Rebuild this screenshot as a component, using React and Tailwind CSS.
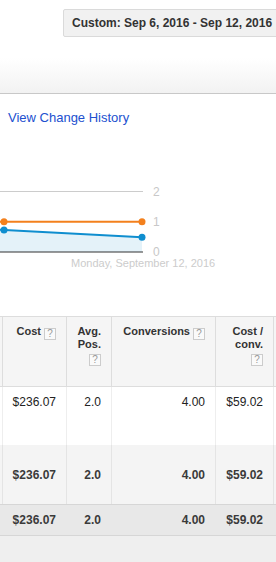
import React from 'react';

const font = { fontFamily: '"Liberation Sans", Arial, sans-serif' };

const Help = ({ className = '' }) => (
  <span className={`inline-flex items-center justify-center w-[12px] h-[12px] border border-[#cccccc] bg-[#fafafa] text-[10px] font-normal leading-none text-[#999999] align-[-2px] ${className}`}>
    ?
  </span>
);

const Chart = () => (
  <svg width="276" height="191" className="block" style={font}>
    {/* grid */}
    <line x1="0" y1="66.5" x2="143" y2="66.5" stroke="#cccccc" strokeWidth="1" />
    {/* area under blue */}
    <polygon points="0,104.8 4,105 142,112.3 142,127 0,127" fill="#e4f2f9" />
    <line x1="0" y1="104.8" x2="142" y2="112.3" stroke="#0f8ecf" strokeWidth="2" />
    <line x1="0" y1="96.8" x2="142" y2="96.8" stroke="#f3801d" strokeWidth="2" />
    <circle cx="4" cy="96.8" r="3.5" fill="#f3801d" />
    <circle cx="142" cy="96.8" r="3.5" fill="#f3801d" />
    <circle cx="4" cy="105" r="3.5" fill="#0f8ecf" />
    <circle cx="142" cy="112.3" r="3.5" fill="#0f8ecf" />
    {/* axis */}
    <line x1="0" y1="127" x2="143" y2="127" stroke="#333333" strokeWidth="1" />
    <text x="153" y="70.5" fontSize="12" fill="#c8c8c8">2</text>
    <text x="153" y="101" fontSize="12" fill="#c8c8c8">1</text>
    <text x="153" y="130.5" fontSize="12" fill="#c8c8c8">0</text>
    <text x="71" y="142" fontSize="11" fill="#cccccc">Monday, September 12, 2016</text>
  </svg>
);

const cols = 'grid grid-cols-[3px_64px_45px_104px_58px_1fr]';

export default function App() {
  const values = ['$236.07', '2.0', '4.00', '$59.02'];

  return (
    <div className="w-[276px] min-h-[562px] overflow-hidden flex flex-col bg-white" style={font}>
      {/* top bar */}
      <div className="h-[94px] border-b border-[#c8c8c8] bg-[linear-gradient(to_bottom,#ffffff_58px,#f2f2f2_93px)] pt-[9px] pl-[63px]">
        <div className="w-[240px] h-[28px] flex items-center pl-[8px] border border-[#dadada] rounded-[2px] bg-[#f1f1f1] text-[12px] font-bold text-[#333333] whitespace-nowrap">
          Custom: Sep 6, 2016 - Sep 12, 2016
        </div>
      </div>

      <div className="pt-[16px] pl-[8px] text-[13px] leading-[15px] text-[#2150cf]">View Change History</div>

      <Chart />

      {/* table */}
      <div className="border-t border-[#dddddd]">
        <div className={`${cols} h-[70px] bg-[#f5f5f5] border-b border-[#dddddd] text-[11px] leading-[13px] font-bold text-[#333333]`}>
          <div className="border-r border-[#dddddd]" />
          <div className="border-r border-[#dddddd] pt-[8px] pr-[10px] text-right whitespace-nowrap">
            Cost<Help className="ml-[3px]" />
          </div>
          <div className="border-r border-[#dddddd] pt-[8px] pr-[10px] text-right">
            <div>Avg.</div>
            <div>Pos.</div>
            <div><Help /></div>
          </div>
          <div className="border-r border-[#dddddd] pt-[8px] pr-[10px] text-right whitespace-nowrap">
            Conversions<Help className="ml-[3px]" />
          </div>
          <div className="border-r border-[#dddddd] pt-[8px] pr-[10px] text-right">
            <div>Cost /</div>
            <div>conv.</div>
            <div><Help /></div>
          </div>
          <div />
        </div>

        <div className={`${cols} h-[58px] bg-white text-[12px] leading-[14px] text-[#222222]`}>
          <div className="border-r border-[#eeeeee]" />
          {values.map((v) => (
            <div key={v} className="border-r border-[#eeeeee] pt-[8px] pr-[10px] text-right">{v}</div>
          ))}
          <div />
        </div>

        <div className={`${cols} h-[59px] bg-[#f4f4f4] text-[12px] leading-[14px] font-bold text-[#3a3a3a]`}>
          <div className="border-r border-[#e4e4e4]" />
          {values.map((v) => (
            <div key={v} className="border-r border-[#e4e4e4] flex items-center justify-end pr-[10px]">{v}</div>
          ))}
          <div />
        </div>

        <div className={`${cols} h-[32px] bg-[#e8e8e8] border-t border-b border-[#d6d6d6] text-[12px] leading-[14px] font-bold text-[#3a3a3a]`}>
          <div />
          {values.map((v) => (
            <div key={v} className="flex items-center justify-end pr-[11px]">{v}</div>
          ))}
          <div />
        </div>
      </div>

      <div className="flex-1 bg-[#efefef]" />
    </div>
  );
}
